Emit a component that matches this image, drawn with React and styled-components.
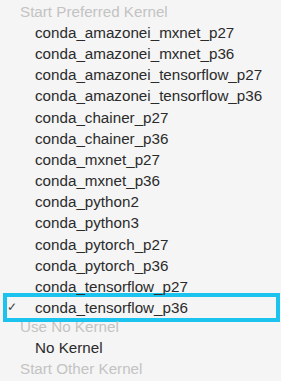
import styled, { createGlobalStyle } from "styled-components";

const GlobalStyle = createGlobalStyle`
    html, body {
        margin: 0;
        padding: 0;
        background: #f5f5f5;
    }
`;

const Menu = styled.ul`
    list-style: none;
    margin: 0;
    padding: 1px 0 0;
    width: 281px;
    height: 381px;
    overflow: hidden;
    background: #f5f5f5;
    font-family: "Liberation Sans", Arial, sans-serif;
    font-size: 15.2px;
    -webkit-font-smoothing: antialiased;
`;

const Heading = styled.li`
    padding-left: 20px;
    line-height: 21px;
    color: #c3c3c3;
`;

const Item = styled.li`
    display: flex;
    align-items: center;
    line-height: 21.15px;
    color: #2b2b2b;
    padding-left: ${({ selected }) => (selected ? "0" : "35px")};
    margin: ${({ selected }) => (selected ? "-4px 1px -6px 3px" : "0")};
    border: ${({ selected }) => (selected ? "4px solid #1cc3ee" : "none")};
`;

const Check = styled.span`
    width: 28px;
    font-size: 12px;
    color: #444;
`;

const kernels = [
    "conda_amazonei_mxnet_p27",
    "conda_amazonei_mxnet_p36",
    "conda_amazonei_tensorflow_p27",
    "conda_amazonei_tensorflow_p36",
    "conda_chainer_p27",
    "conda_chainer_p36",
    "conda_mxnet_p27",
    "conda_mxnet_p36",
    "conda_python2",
    "conda_python3",
    "conda_pytorch_p27",
    "conda_pytorch_p36",
    "conda_tensorflow_p27",
];

export default function App() {
    return (
        <>
            <GlobalStyle />
            <Menu>
                <Heading>Start Preferred Kernel</Heading>
                {kernels.map((k) => (
                    <Item key={k}>{k}</Item>
                ))}
                <Item selected>
                    <Check>✓</Check>
                    conda_tensorflow_p36
                </Item>
                <Heading>Use No Kernel</Heading>
                <Item>No Kernel</Item>
                <Heading>Start Other Kernel</Heading>
            </Menu>
        </>
    );
}
